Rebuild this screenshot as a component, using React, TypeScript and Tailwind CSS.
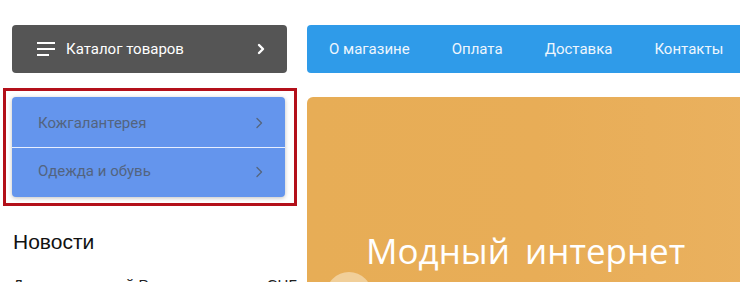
import React from 'react';

const navLinks = ['О магазине', 'Оплата', 'Доставка', 'Контакты'];
const categories = ['Кожгалантерея', 'Одежда и обувь'];

function Chevron({className}: {className?: string}) {
  return (
    <svg width="8" height="12" viewBox="0 0 8 12" className={className} fill="none">
      <path d="M2 1.5 6.5 6 2 10.5" stroke="currentColor" strokeWidth="1.4" strokeLinecap="round" strokeLinejoin="round" />
    </svg>
  );
}

export default function App() {
  return (
    <div className="h-[282px] w-[740px] overflow-hidden bg-white font-['Roboto',sans-serif]">
      <div className="flex pt-[25px]">
        {/* left column */}
        <div className="ml-[3px] flex w-[294px] shrink-0 flex-col">
          <button className="ml-[9px] flex h-[48px] w-[275px] items-center rounded-[4px] bg-[#555555] pl-[25px] pr-[22px] text-white">
            <span className="flex w-[18px] flex-col gap-[4px]">
              <span className="h-[2px] w-[18px] bg-white" />
              <span className="h-[2px] w-[18px] bg-white" />
              <span className="h-[2px] w-[12px] bg-white" />
            </span>
            <span className="ml-[11px] text-[15px]">Каталог товаров</span>
            <svg width="8" height="12" viewBox="0 0 8 12" className="ml-auto" fill="none">
              <path d="M2 2 6 6 2 10" stroke="white" strokeWidth="2.4" strokeLinecap="round" strokeLinejoin="round" />
            </svg>
          </button>

          <div className="mt-[15px] h-[118px] border-[3px] border-[#b3101a] p-[6px]">
            <ul className="w-[273px] overflow-hidden rounded-[4px] bg-[#6495ed] shadow-[0_1px_4px_rgba(0,0,0,0.25)]">
              {categories.map((c, i) => (
                <li
                  key={c}
                  className={`flex h-[50px] items-center pl-[26px] pr-[22px] text-[15px] text-[#53647f] ${
                    i > 0 ? 'border-t border-[#e8efff] pb-[2px]' : 'pt-[2px]'
                  }`}
                >
                  <span>{c}</span>
                  <Chevron className="ml-auto text-[#56667f]" />
                </li>
              ))}
            </ul>
          </div>

          <h2 className="ml-[10px] mt-[24px] font-['Liberation_Sans',sans-serif] text-[21px] leading-[24px] text-[#111]">
            Новости
          </h2>
          <p className="ml-[10px] mt-[21px] font-['Liberation_Sans',sans-serif] text-[15px] leading-[20px] text-[#222]">
            Доставка по всей России и странам СНГ
          </p>
        </div>

        {/* right column */}
        <div className="ml-[10px] flex w-[460px] shrink-0 flex-col">
          <nav className="flex h-[48px] items-center rounded-l-[4px] bg-[#2f9be9] pl-[22px] text-[15px] text-[#eef6fd]">
            {navLinks.map((l) => (
              <a key={l} className="mr-[42px] whitespace-nowrap">
                {l}
              </a>
            ))}
          </nav>

          <div className="relative mt-[24px] h-[200px] overflow-hidden rounded-tl-[6px] bg-gradient-to-r from-[#e7ad56] via-[#e8ad57] to-[#eab15f]">
            <div className="pl-[59px] pt-[134px] font-['Open_Sans',sans-serif] text-[35px] leading-[40px] text-white [word-spacing:6px]">
              Модный интернет
            </div>
            <div className="absolute left-[19px] top-[175px] h-[46px] w-[46px] rounded-full bg-[#f1cf99]" />
          </div>
        </div>
      </div>
    </div>
  );
}
